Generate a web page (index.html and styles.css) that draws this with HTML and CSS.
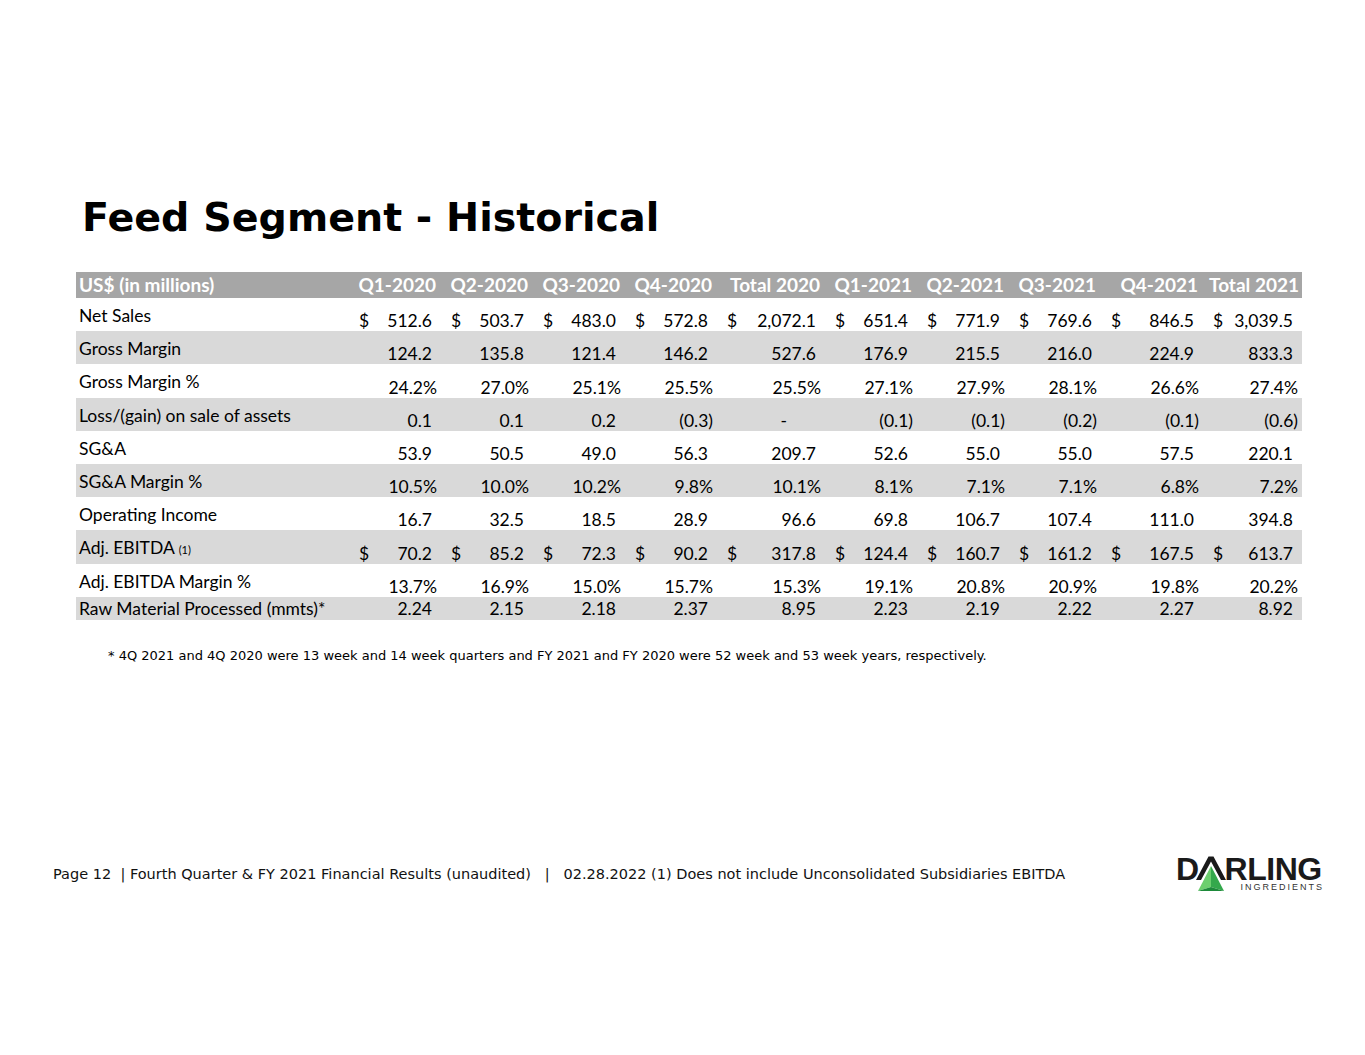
FILE: index.html
```html
<!DOCTYPE html>
<html lang="en">
<head>
<meta charset="utf-8">
<title>Feed Segment - Historical</title>
<link rel="stylesheet" href="styles.css">
</head>
<body>
<div class="slide">
  <h1 class="title">Feed Segment - Historical</h1>
  <div class="table">
    <div class="row head">
      <div class="lab">US$ (in millions)</div>
      <div class="hc">Q1-2020</div><div class="hc">Q2-2020</div><div class="hc">Q3-2020</div><div class="hc">Q4-2020</div><div class="hc">Total 2020</div>
      <div class="hc">Q1-2021</div><div class="hc">Q2-2021</div><div class="hc">Q3-2021</div><div class="hc">Q4-2021</div><div class="hc">Total 2021</div>
    </div>
    <div class="row">
      <div class="lab">Net Sales</div>
      <div class="c"><span class="d">$</span><span class="v n">512.6</span></div>
      <div class="c"><span class="d">$</span><span class="v n">503.7</span></div>
      <div class="c"><span class="d">$</span><span class="v n">483.0</span></div>
      <div class="c"><span class="d">$</span><span class="v n">572.8</span></div>
      <div class="c"><span class="d">$</span><span class="v n">2,072.1</span></div>
      <div class="c"><span class="d">$</span><span class="v n">651.4</span></div>
      <div class="c"><span class="d">$</span><span class="v n">771.9</span></div>
      <div class="c"><span class="d">$</span><span class="v n">769.6</span></div>
      <div class="c"><span class="d">$</span><span class="v n">846.5</span></div>
      <div class="c"><span class="d">$</span><span class="v n">3,039.5</span></div>
    </div>
    <div class="row alt">
      <div class="lab">Gross Margin</div>
      <div class="c"><span class="v n">124.2</span></div>
      <div class="c"><span class="v n">135.8</span></div>
      <div class="c"><span class="v n">121.4</span></div>
      <div class="c"><span class="v n">146.2</span></div>
      <div class="c"><span class="v n">527.6</span></div>
      <div class="c"><span class="v n">176.9</span></div>
      <div class="c"><span class="v n">215.5</span></div>
      <div class="c"><span class="v n">216.0</span></div>
      <div class="c"><span class="v n">224.9</span></div>
      <div class="c"><span class="v n">833.3</span></div>
    </div>
    <div class="row">
      <div class="lab">Gross Margin %</div>
      <div class="c"><span class="v p">24.2%</span></div>
      <div class="c"><span class="v p">27.0%</span></div>
      <div class="c"><span class="v p">25.1%</span></div>
      <div class="c"><span class="v p">25.5%</span></div>
      <div class="c"><span class="v p">25.5%</span></div>
      <div class="c"><span class="v p">27.1%</span></div>
      <div class="c"><span class="v p">27.9%</span></div>
      <div class="c"><span class="v p">28.1%</span></div>
      <div class="c"><span class="v p">26.6%</span></div>
      <div class="c"><span class="v p">27.4%</span></div>
    </div>
    <div class="row alt">
      <div class="lab">Loss/(gain) on sale of assets</div>
      <div class="c"><span class="v n">0.1</span></div>
      <div class="c"><span class="v n">0.1</span></div>
      <div class="c"><span class="v n">0.2</span></div>
      <div class="c"><span class="v p">(0.3)</span></div>
      <div class="c"><span class="v z">-</span></div>
      <div class="c"><span class="v p">(0.1)</span></div>
      <div class="c"><span class="v p">(0.1)</span></div>
      <div class="c"><span class="v p">(0.2)</span></div>
      <div class="c"><span class="v p">(0.1)</span></div>
      <div class="c"><span class="v p">(0.6)</span></div>
    </div>
    <div class="row">
      <div class="lab">SG&amp;A</div>
      <div class="c"><span class="v n">53.9</span></div>
      <div class="c"><span class="v n">50.5</span></div>
      <div class="c"><span class="v n">49.0</span></div>
      <div class="c"><span class="v n">56.3</span></div>
      <div class="c"><span class="v n">209.7</span></div>
      <div class="c"><span class="v n">52.6</span></div>
      <div class="c"><span class="v n">55.0</span></div>
      <div class="c"><span class="v n">55.0</span></div>
      <div class="c"><span class="v n">57.5</span></div>
      <div class="c"><span class="v n">220.1</span></div>
    </div>
    <div class="row alt">
      <div class="lab">SG&amp;A Margin %</div>
      <div class="c"><span class="v p">10.5%</span></div>
      <div class="c"><span class="v p">10.0%</span></div>
      <div class="c"><span class="v p">10.2%</span></div>
      <div class="c"><span class="v p">9.8%</span></div>
      <div class="c"><span class="v p">10.1%</span></div>
      <div class="c"><span class="v p">8.1%</span></div>
      <div class="c"><span class="v p">7.1%</span></div>
      <div class="c"><span class="v p">7.1%</span></div>
      <div class="c"><span class="v p">6.8%</span></div>
      <div class="c"><span class="v p">7.2%</span></div>
    </div>
    <div class="row">
      <div class="lab">Operating Income</div>
      <div class="c"><span class="v n">16.7</span></div>
      <div class="c"><span class="v n">32.5</span></div>
      <div class="c"><span class="v n">18.5</span></div>
      <div class="c"><span class="v n">28.9</span></div>
      <div class="c"><span class="v n">96.6</span></div>
      <div class="c"><span class="v n">69.8</span></div>
      <div class="c"><span class="v n">106.7</span></div>
      <div class="c"><span class="v n">107.4</span></div>
      <div class="c"><span class="v n">111.0</span></div>
      <div class="c"><span class="v n">394.8</span></div>
    </div>
    <div class="row alt">
      <div class="lab">Adj. EBITDA <small class="ref">(1)</small></div>
      <div class="c"><span class="d">$</span><span class="v n">70.2</span></div>
      <div class="c"><span class="d">$</span><span class="v n">85.2</span></div>
      <div class="c"><span class="d">$</span><span class="v n">72.3</span></div>
      <div class="c"><span class="d">$</span><span class="v n">90.2</span></div>
      <div class="c"><span class="d">$</span><span class="v n">317.8</span></div>
      <div class="c"><span class="d">$</span><span class="v n">124.4</span></div>
      <div class="c"><span class="d">$</span><span class="v n">160.7</span></div>
      <div class="c"><span class="d">$</span><span class="v n">161.2</span></div>
      <div class="c"><span class="d">$</span><span class="v n">167.5</span></div>
      <div class="c"><span class="d">$</span><span class="v n">613.7</span></div>
    </div>
    <div class="row">
      <div class="lab">Adj. EBITDA Margin %</div>
      <div class="c"><span class="v p">13.7%</span></div>
      <div class="c"><span class="v p">16.9%</span></div>
      <div class="c"><span class="v p">15.0%</span></div>
      <div class="c"><span class="v p">15.7%</span></div>
      <div class="c"><span class="v p">15.3%</span></div>
      <div class="c"><span class="v p">19.1%</span></div>
      <div class="c"><span class="v p">20.8%</span></div>
      <div class="c"><span class="v p">20.9%</span></div>
      <div class="c"><span class="v p">19.8%</span></div>
      <div class="c"><span class="v p">20.2%</span></div>
    </div>
    <div class="row alt last">
      <div class="lab">Raw Material Processed (mmts)*</div>
      <div class="c"><span class="v n">2.24</span></div>
      <div class="c"><span class="v n">2.15</span></div>
      <div class="c"><span class="v n">2.18</span></div>
      <div class="c"><span class="v n">2.37</span></div>
      <div class="c"><span class="v n">8.95</span></div>
      <div class="c"><span class="v n">2.23</span></div>
      <div class="c"><span class="v n">2.19</span></div>
      <div class="c"><span class="v n">2.22</span></div>
      <div class="c"><span class="v n">2.27</span></div>
      <div class="c"><span class="v n">8.92</span></div>
    </div>
  </div>
  <p class="note">* 4Q 2021 and 4Q 2020 were 13 week and 14 week quarters and FY 2021 and FY 2020 were 52 week and 53 week years, respectively.</p>
  <div class="footer">
    <span class="foot">Page 12  | Fourth Quarter &amp; FY 2021 Financial Results (unaudited)   |   02.28.2022 (1) Does not include Unconsolidated Subsidiaries EBITDA</span>
    <div class="logo" aria-label="Darling Ingredients">
      <div class="logo-word">
        <span class="lw">D</span>
        <svg class="logo-a" width="32" height="36" viewBox="0 0 32 36" aria-hidden="true">
          <polygon points="1,24 13.5,0.5 18.5,0.5 31,24 26,24 16,5.5 6,24" fill="#1a1a1a"/>
          <polygon points="16,10 3,35 16,31" fill="#6ccf6e"/>
          <polygon points="16,10 16,31 29,35" fill="#34a84c"/>
          <polygon points="3,35 16,31 29,35" fill="#1d8a3a"/>
        </svg>
        <span class="lw">RLING</span>
      </div>
      <div class="logo-sub">INGREDIENTS</div>
    </div>
  </div>
</div>
</body>
</html>
```

FILE: styles.css
```css
html, body {
  margin: 0;
  padding: 0;
  background: #ffffff;
}
.slide {
  width: 1365px;
  height: 1055px;
  padding-top: 196px;
  box-sizing: border-box;
  color: #000;
}
.title {
  margin: 0 0 0 82px;
  font-family: "DejaVu Sans", Verdana, sans-serif;
  font-weight: 700;
  font-size: 39.6px;
  line-height: 42px;
  color: #000;
}
.table {
  margin: 34px 0 0 76px;
  width: 1226px;
  font-family: Lato, "Open Sans", sans-serif;
  font-size: 17.5px;
  color: #000;
}
.row {
  display: grid;
  grid-template-columns: 279px 84px 92px 92px 92px 108px 92px 92px 92px 102px 101px;
  height: 33.2px;
}
.row.alt { background: #d9d9d9; }
.row.head {
  height: 26px;
  background: #a6a6a6;
  color: #fff;
  font-weight: 700;
  font-size: 19px;
}
.row.last { height: 23px; }
.lab {
  padding: 8px 0 0 3px;
  line-height: 20px;
  white-space: nowrap;
}
.head .lab { padding-top: 3px; }
.hc {
  text-align: right;
  padding: 3px 3px 0 0;
  line-height: 20px;
  white-space: nowrap;
}
.c {
  display: flex;
  align-items: flex-end;
  padding: 0 2px 0 12px;
  line-height: 20px;
}
.c:nth-child(2) { padding-left: 4px; }
.c:last-child { padding-right: 4px; }
.last .lab { padding-top: 2px; }
.last .c { align-items: flex-start; padding-top: 2px; }
.d { margin-right: auto; }
.v { margin-left: auto; }
.n { padding-right: 5px; }
.z { padding-right: 34px; }
.ref { font-size: 11px; }
.note {
  margin: 28px 0 0 108px;
  font-family: "DejaVu Sans", Verdana, sans-serif;
  font-size: 13px;
  line-height: 16px;
  color: #000;
}
.footer {
  margin-top: 192px;
  display: flex;
  align-items: center;
  justify-content: space-between;
  padding: 0 43px 0 53px;
}
.foot {
  white-space: pre;
  font-family: "DejaVu Sans", Verdana, sans-serif;
  font-size: 14.5px;
  color: #111;
}
.logo {
  display: flex;
  flex-direction: column;
  width: 146px;
}
.logo-word {
  display: flex;
  align-items: flex-start;
  height: 26px;
  font-family: "Liberation Sans", Arial, sans-serif;
  font-weight: 700;
  font-size: 32px;
  line-height: 26px;
  color: #1a1a1a;
  letter-spacing: -0.5px;
}
.logo-a {
  display: block;
  flex: none;
  overflow: visible;
  margin: 0 -2px 0 -4px;
}
.logo-sub {
  align-self: flex-end;
  margin-right: -2px;
  height: 10px;
  font-family: "Liberation Sans", Arial, sans-serif;
  font-size: 9px;
  line-height: 10px;
  letter-spacing: 2px;
  color: #333;
}
```
